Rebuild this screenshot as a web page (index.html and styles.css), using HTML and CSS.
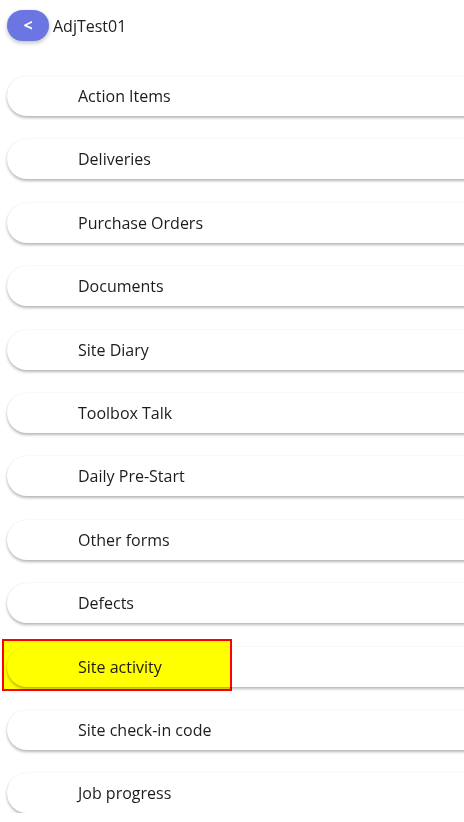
FILE: index.html
```html
<!DOCTYPE html>
<html>
<head>
<meta charset="utf-8">
<link rel="stylesheet" href="styles.css">
</head>
<body>
<div class="page">
  <header class="header">
    <button class="back">&lt;</button>
    <span class="title">AdjTest01</span>
  </header>
  <nav class="menu">
    <div class="item"><span>Action Items</span></div>
    <div class="item"><span>Deliveries</span></div>
    <div class="item"><span>Purchase Orders</span></div>
    <div class="item"><span>Documents</span></div>
    <div class="item"><span>Site Diary</span></div>
    <div class="item"><span>Toolbox Talk</span></div>
    <div class="item"><span>Daily Pre-Start</span></div>
    <div class="item"><span>Other forms</span></div>
    <div class="item"><span>Defects</span></div>
    <div class="item highlighted"><span>Site activity</span><div class="mark"></div></div>
    <div class="item"><span>Site check-in code</span></div>
    <div class="item"><span>Job progress</span></div>
  </nav>
</div>
</body>
</html>
```

FILE: styles.css
```css
html, body {
  margin: 0;
  padding: 0;
  background: #ffffff;
  overflow: hidden;
}
body {
  font-family: "Open Sans", "Noto Sans", sans-serif;
  color: #1a1a1a;
}
.page {
  width: 464px;
  overflow: hidden;
}
.header {
  display: flex;
  align-items: center;
  padding: 10px 0 0 7px;
  height: 31px;
  gap: 4px;
}
.back {
  width: 42px;
  height: 31px;
  border: none;
  border-radius: 16px;
  background: #6b76e3;
  color: #ffffff;
  font-family: "Open Sans", sans-serif;
  font-weight: 700;
  font-size: 16px;
  line-height: 31px;
  padding: 0 0 2px 0;
  box-shadow: 0 2px 4px rgba(0,0,0,0.25);
}
.title {
  font-size: 16px;
  color: #222;
}
.menu {
  display: flex;
  flex-direction: column;
  gap: 23.4px;
  padding: 35px 0 0 7px;
}
.item {
  position: relative;
  height: 40px;
  width: 500px;
  border-radius: 20px;
  background: #ffffff;
  box-shadow: 0 2px 3px rgba(0,0,0,0.28), 0 0 2px rgba(0,0,0,0.06);
  display: flex;
  align-items: center;
  padding-left: 71px;
  box-sizing: border-box;
  font-size: 16px;
  color: #1c1c1c;
}
.mark {
  position: absolute;
  left: -5px;
  top: -8px;
  width: 226px;
  height: 48px;
  border: 2px solid #ff0000;
  background: #ffff00;
  mix-blend-mode: multiply;
}
```
